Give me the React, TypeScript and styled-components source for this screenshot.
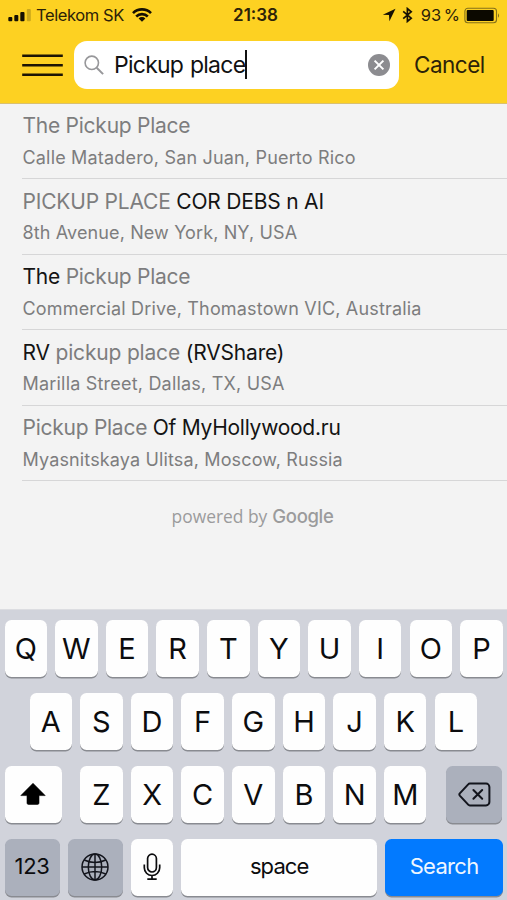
import React from "react";
import styled, { createGlobalStyle } from "styled-components";

const Global = createGlobalStyle`
  * { box-sizing: border-box; }
  body { margin: 0; background: #f3f3f3; }
`;

const Screen = styled.div`
  width: 507px;
  height: 900px;
  display: flex;
  flex-direction: column;
  overflow: hidden;
  background: #f3f3f3;
  color: #111;
  font-family: Inter, "Liberation Sans", sans-serif;
  white-space: nowrap;
`;

const Header = styled.header`
  height: 104px;
  flex: none;
  background: #fdd122;
  border-bottom: 1px solid #d9c070;
`;

const StatusBar = styled.div`
  height: 30px;
  display: grid;
  grid-template-columns: 1fr auto 1fr;
  align-items: center;
  padding: 0 6px 0 8px;
  font-size: 16.5px;
  line-height: 30px;
  color: #2c2208;
`;

const StatusSide = styled.div<{ $end?: boolean }>`
  display: flex;
  align-items: center;
  justify-content: ${(p) => (p.$end ? "flex-end" : "flex-start")};
`;

const Carrier = styled.span`
  margin: 0 8px 0 5px;
  letter-spacing: -0.4px;
`;

const Clock = styled.span`
  padding-left: 2px;
  font-weight: 600;
  font-size: 17px;
  letter-spacing: 0;
`;

const Percent = styled.span`
  margin: 0 4px 0 8px;
  word-spacing: -2px;
`;

const Gap = styled.i`
  width: 6px;
`;

const SearchRow = styled.div`
  display: flex;
  align-items: center;
  height: 49px;
  margin-top: 10.5px;
  padding-left: 22px;
`;

const Field = styled.div`
  width: 325.5px;
  height: 48.5px;
  margin-left: 10.5px;
  padding: 0 9.5px 0 10px;
  display: flex;
  align-items: center;
  border-radius: 13px;
  background: #fff;
`;

const Query = styled.span`
  margin-left: 9.5px;
  font-size: 23px;
  line-height: 30px;
  letter-spacing: -0.75px;
  word-spacing: 1px;
  transform: translateY(-0.5px);
`;

const Caret = styled.i`
  width: 2px;
  height: 29px;
  background: #111;
  margin: 0 auto 1px 0;
`;

const Cancel = styled.span`
  margin-left: 15px;
  padding-bottom: 2px;
  font-size: 22.5px;
  letter-spacing: -0.5px;
  color: #2c2208;
`;

const Results = styled.ul`
  list-style: none;
  margin: 0;
  padding: 0 0 0 22px;
`;

const Result = styled.li`
  height: 75.55px;
  padding: 8.5px 0 0 0.5px;
  border-bottom: 1px solid #d6d6d7;
  color: #7d7d7e;

  &:first-child {
    height: 75px;
    padding-top: 8px;
  }
`;

const Title = styled.div<{ $spacing: number }>`
  font-size: 21px;
  line-height: 28px;
  letter-spacing: ${(p) => p.$spacing}px;
`;

const Plain = styled.span`
  color: #141414;
`;

const Address = styled.div<{ $spacing: number }>`
  margin-top: 4.5px;
  font-size: 18px;
  line-height: 26px;
  letter-spacing: ${(p) => p.$spacing}px;
`;

const Credit = styled.div`
  flex: 1;
  display: flex;
  justify-content: center;
  align-items: baseline;
  gap: 5px;
  padding: 23px 2px 0 0;
  color: #9b9b9c;
  font: 17.4px/24px "Open Sans", sans-serif;
`;

const Brand = styled.span`
  font: 500 18.5px/24px Inter, sans-serif;
  letter-spacing: -0.35px;
`;

const Keyboard = styled.div`
  flex: none;
  height: 291px;
  padding: 10px 4.5px 0;
  display: flex;
  flex-direction: column;
  gap: 16px;
  background: #d1d3db;
  border-top: 1px solid #dcdde1;
`;

const KeyRow = styled.div<{ $inset?: number }>`
  display: flex;
  gap: 8.15px;
  padding: 0 ${(p) => p.$inset ?? 0}px;
`;

type Tone = "light" | "dark" | "blue";
const tones: Record<Tone, string> = { light: "#fefefe", dark: "#abb0bc", blue: "#027aff" };

const Key = styled.div<{ $width?: number; $tone?: Tone; $before?: number; $after?: number }>`
  flex: none;
  width: ${(p) => p.$width ?? 42.5}px;
  height: 57px;
  margin-left: ${(p) => p.$before ?? 0}px;
  margin-right: ${(p) => p.$after ?? 0}px;
  padding-bottom: 1px;
  display: flex;
  align-items: center;
  justify-content: center;
  border-radius: 6.5px;
  background: ${(p) => tones[p.$tone ?? "light"]};
  box-shadow: 0 1.5px 0.5px #898b91;
  color: ${(p) => (p.$tone === "blue" ? "#eef6ff" : "#0c0c0e")};
  font-size: 29px;
`;

const KeyLabel = styled.span<{ $spacing: number }>`
  padding-bottom: 2px;
  font-size: 22px;
  letter-spacing: ${(p) => p.$spacing}px;
`;

type Part = { text: string; plain?: boolean };
type Place = { title: Part[]; address: string; titleSpacing: number; addressSpacing: number };

const results: Place[] = [
  {
    title: [{ text: "The Pickup Place" }],
    address: "Calle Matadero, San Juan, Puerto Rico",
    titleSpacing: -0.25,
    addressSpacing: 0.18,
  },
  {
    title: [{ text: "PICKUP PLACE " }, { text: "COR DEBS n AI", plain: true }],
    address: "8th Avenue, New York, NY, USA",
    titleSpacing: -0.2,
    addressSpacing: 0.12,
  },
  {
    title: [{ text: "The ", plain: true }, { text: "Pickup Place" }],
    address: "Commercial Drive, Thomastown VIC, Australia",
    titleSpacing: -0.25,
    addressSpacing: 0.18,
  },
  {
    title: [{ text: "RV ", plain: true }, { text: "pickup place " }, { text: "(RVShare)", plain: true }],
    address: "Marilla Street, Dallas, TX, USA",
    titleSpacing: -0.18,
    addressSpacing: 0.2,
  },
  {
    title: [{ text: "Pickup Place " }, { text: "Of MyHollywood.ru", plain: true }],
    address: "Myasnitskaya Ulitsa, Moscow, Russia",
    titleSpacing: -0.26,
    addressSpacing: 0.14,
  },
];

const Signal = () => (
  <svg width="23" height="14" viewBox="0 0 23 14" fill="#151003">
    <rect x="0.3" y="9" width="4" height="4.2" rx="1" />
    <rect x="6.3" y="7" width="4" height="6.2" rx="1" />
    <rect x="12.3" y="4" width="4.2" height="9.2" rx="1" />
    <rect x="18.8" y="1" width="4" height="12.2" rx="1" opacity=".22" />
  </svg>
);

const Wifi = () => (
  <svg width="20" height="14" viewBox="0 0 20 14" fill="none" stroke="#151003" strokeWidth="2.6">
    <path d="M1 5.1a12.8 12.8 0 0 1 18 0" />
    <path d="M4.2 8.5a8.2 8.2 0 0 1 11.6 0" />
    <path d="M10 13.8 6.6 10.4a4.8 4.8 0 0 1 6.8 0Z" fill="#151003" stroke="none" />
  </svg>
);

const Location = () => (
  <svg width="14" height="14" viewBox="0 0 14 14" fill="#151003">
    <path d="M13.5.7 7.4 13.2 7 7.1.8 6.7Z" />
  </svg>
);

const Bluetooth = () => (
  <svg width="11" height="16" viewBox="0 0 11 16" fill="none" stroke="#151003" strokeWidth="1.7">
    <path d="M1.2 4.4 9.2 11.2 5.4 14.4V1.6L9.2 4.8 1.2 11.6" />
  </svg>
);

const Battery = () => (
  <svg width="37" height="17" viewBox="0 0 37 17">
    <rect x=".9" y="1.2" width="31.6" height="14.6" rx="3" fill="none" stroke="#85701a" strokeWidth="1.1" />
    <rect x="2.7" y="3" width="27" height="11" rx="1" fill="#0c0900" />
    <path d="M34 6.2q2.2 2.3 0 4.6Z" fill="#85701a" />
  </svg>
);

const Menu = () => (
  <svg width="41" height="24" viewBox="0 0 41 24" stroke="#1c1503" strokeWidth="2.5">
    <path d="M.2 2.7h40.6M.2 12.2h40.6M.2 21.7h40.6" />
  </svg>
);

const Magnifier = () => (
  <svg width="21" height="21" viewBox="0 0 21 21" fill="none" stroke="#97979a" strokeWidth="1.6">
    <circle cx="7.8" cy="7.8" r="6.7" />
    <path d="m12.7 12.7 6.4 6.4" strokeWidth="2" />
  </svg>
);

const Clear = () => (
  <svg width="22" height="22" viewBox="0 0 22 22">
    <circle cx="11" cy="11" r="11" fill="#8c8c90" />
    <path d="m6.6 6.6 8.8 8.8m0-8.8-8.8 8.8" stroke="#fff" strokeWidth="2" />
  </svg>
);

const Shift = () => (
  <svg width="26" height="24" viewBox="0 0 26 24">
    <path
      d="M13 1.3 25.2 13.6H19V21q0 1.4-1.4 1.4H8.4Q7 22.4 7 21V13.6H.8Z"
      fill="#000"
      stroke="#000"
      strokeWidth=".6"
      strokeLinejoin="round"
    />
  </svg>
);

const Backspace = () => (
  <svg width="33" height="25" viewBox="0 0 33 25" fill="none" stroke="#13151d" strokeWidth="2" strokeLinejoin="round" strokeLinecap="round">
    <path d="M11.8 1.6H28A3.4 3.4 0 0 1 31.4 5v15a3.4 3.4 0 0 1-3.4 3.4H11.8q-.9 0-1.6-.8l-8.4-9q-.9-1.1 0-2.2l8.4-9q.7-.8 1.6-.8Z" />
    <path d="m15.4 8 8.8 8.8m0-8.8-8.8 8.8" />
  </svg>
);

const Globe = () => (
  <svg width="28" height="28" viewBox="0 0 28 28" fill="none" stroke="#13151d" strokeWidth="1.5">
    <circle cx="14" cy="14" r="13" />
    <ellipse cx="14" cy="14" rx="6.7" ry="13" />
    <path d="M14 1v26M1 14h26M3.2 7q10.8 5 21.6 0M3.2 21q10.8-5 21.6 0" />
  </svg>
);

const Mic = () => (
  <svg width="18" height="28" viewBox="0 0 18 28" fill="none" stroke="#0c0c0e" strokeWidth="1.7">
    <rect x="4.6" y="1.2" width="8.8" height="17.8" rx="4.4" />
    <path d="M1.3 11.6v3.2a7.7 7.7 0 0 0 15.4 0v-3.2M9 22.5v3.7M4.3 26.2h9.4" />
  </svg>
);

export default function App() {
  return (
    <Screen>
      <Global />
      <Header>
        <StatusBar>
          <StatusSide>
            <Signal />
            <Carrier>Telekom SK</Carrier>
            <Wifi />
          </StatusSide>
          <Clock>21:38</Clock>
          <StatusSide $end>
            <Location />
            <Gap />
            <Bluetooth />
            <Percent>93 %</Percent>
            <Battery />
          </StatusSide>
        </StatusBar>
        <SearchRow>
          <Menu />
          <Field>
            <Magnifier />
            <Query>Pickup place</Query>
            <Caret />
            <Clear />
          </Field>
          <Cancel>Cancel</Cancel>
        </SearchRow>
      </Header>
      <Results>
        {results.map((place) => (
          <Result key={place.address}>
            <Title $spacing={place.titleSpacing}>
              {place.title.map(({ text, plain }) => (plain ? <Plain key={text}>{text}</Plain> : text))}
            </Title>
            <Address $spacing={place.addressSpacing}>{place.address}</Address>
          </Result>
        ))}
      </Results>
      <Credit>
        powered by <Brand>Google</Brand>
      </Credit>
      <Keyboard>
        <KeyRow>
          {[..."QWERTYUIOP"].map((c) => (
            <Key key={c}>{c}</Key>
          ))}
        </KeyRow>
        <KeyRow $inset={25}>
          {[..."ASDFGHJKL"].map((c) => (
            <Key key={c}>{c}</Key>
          ))}
        </KeyRow>
        <KeyRow>
          <Key $width={57} $after={10.5}>
            <Shift />
          </Key>
          {[..."ZXCVBNM"].map((c) => (
            <Key key={c}>{c}</Key>
          ))}
          <Key $width={56.5} $tone="dark" $before={11.3}>
            <Backspace />
          </Key>
        </KeyRow>
        <KeyRow>
          <Key $width={55} $tone="dark">
            <KeyLabel $spacing={-0.4}>123</KeyLabel>
          </Key>
          <Key $width={55} $tone="dark">
            <Globe />
          </Key>
          <Key>
            <Mic />
          </Key>
          <Key $width={195.5}>
            <KeyLabel $spacing={-0.9}>space</KeyLabel>
          </Key>
          <Key $width={118} $tone="blue">
            <KeyLabel $spacing={-0.7}>Search</KeyLabel>
          </Key>
        </KeyRow>
      </Keyboard>
    </Screen>
  );
}
